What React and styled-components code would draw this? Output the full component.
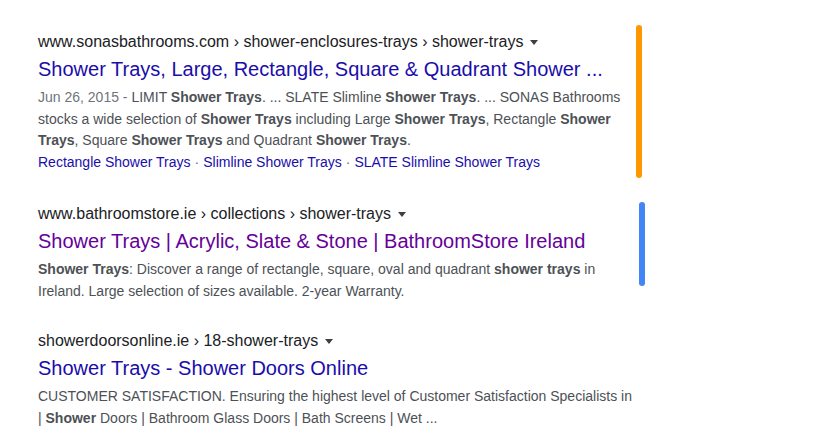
import React from "react";
import styled, { createGlobalStyle } from "styled-components";

const Global = createGlobalStyle`
  html, body { margin: 0; padding: 0; background: #fff; }
  body { font-family: "Liberation Sans", Arial, sans-serif; }
`;

const Page = styled.div`
  width: 837px;
  height: 439px;
  overflow: hidden;
  padding: 30px 0 0 38px;
  box-sizing: border-box;
  display: flex;
  flex-direction: column;
`;

const Result = styled.div`
  position: relative;
  width: 600px;
  display: flex;
  flex-direction: column;
  margin-top: ${(p) => p.$space || 0}px;
`;

const Crumbs = styled.div`
  font-size: 16px;
  line-height: 24px;
  color: #202124;
  display: flex;
  align-items: center;
  white-space: nowrap;
`;

const Arrow = styled.span`
  display: inline-block;
  width: 0;
  height: 0;
  margin-left: 7px;
  margin-top: 1px;
  border-left: 4px solid transparent;
  border-right: 4px solid transparent;
  border-top: 5px solid #3c4043;
`;

const Title = styled.a`
  display: block;
  margin-top: 2px;
  font-size: 20px;
  line-height: 26px;
  color: ${(p) => (p.$visited ? "#660099" : "#1a0dab")};
  text-decoration: none;
  white-space: nowrap;
`;

const Snippet = styled.div`
  margin-top: 5px;
  font-size: 14px;
  line-height: 21.7px;
  color: #4d5156;
  width: 600px;
  b { color: #4d5156; font-weight: bold; }
`;

const DateText = styled.span`
  color: #70757a;
`;

const Sitelinks = styled.div`
  font-size: 14px;
  line-height: 21.7px;
  color: #1a0dab;
  white-space: nowrap;
`;

const Sep = styled.span`
  color: #70757a;
  margin: 0 4px;
`;

const Marker = styled.div`
  position: absolute;
  left: ${(p) => p.$left}px;
  top: ${(p) => p.$top}px;
  width: 6px;
  height: ${(p) => p.$h}px;
  border-radius: 3px;
  background: ${(p) => p.$color};
`;

export default function App() {
  return (
    <>
      <Global />
      <Page>
        <Result>
          <Marker $left={598} $top={-5} $h={153} $color="#ff9800" />
          <Crumbs>
            www.sonasbathrooms.com › shower-enclosures-trays › shower-trays
            <Arrow />
          </Crumbs>
          <Title href="#">Shower Trays, Large, Rectangle, Square &amp; Quadrant Shower ...</Title>
          <Snippet>
            <DateText>Jun 26, 2015 - </DateText>LIMIT <b>Shower Trays</b>. ... SLATE Slimline{" "}
            <b>Shower Trays</b>. ... SONAS Bathrooms stocks a wide selection of <b>Shower Trays</b>{" "}
            including Large <b>Shower Trays</b>, Rectangle <b>Shower Trays</b>, Square{" "}
            <b>Shower Trays</b> and Quadrant <b>Shower Trays</b>.
          </Snippet>
          <Sitelinks>
            Rectangle Shower Trays<Sep>·</Sep>Slimline Shower Trays<Sep>·</Sep>SLATE Slimline Shower Trays
          </Sitelinks>
        </Result>
        <Result $space={28}>
          <Marker $left={601} $top={0} $h={84} $color="#4285f4" />
          <Crumbs>
            www.bathroomstore.ie › collections › shower-trays
            <Arrow />
          </Crumbs>
          <Title href="#" $visited>
            Shower Trays | Acrylic, Slate &amp; Stone | BathroomStore Ireland
          </Title>
          <Snippet>
            <b>Shower Trays</b>: Discover a range of rectangle, square, oval and quadrant{" "}
            <b>shower trays</b> in Ireland. Large selection of sizes available. 2-year Warranty.
          </Snippet>
        </Result>
        <Result $space={27}>
          <Crumbs>
            showerdoorsonline.ie › 18-shower-trays
            <Arrow />
          </Crumbs>
          <Title href="#">Shower Trays - Shower Doors Online</Title>
          <Snippet>
            CUSTOMER SATISFACTION. Ensuring the highest level of Customer Satisfaction Specialists in |{" "}
            <b>Shower</b> Doors | Bathroom Glass Doors | Bath Screens | Wet ...
          </Snippet>
        </Result>
      </Page>
    </>
  );
}
